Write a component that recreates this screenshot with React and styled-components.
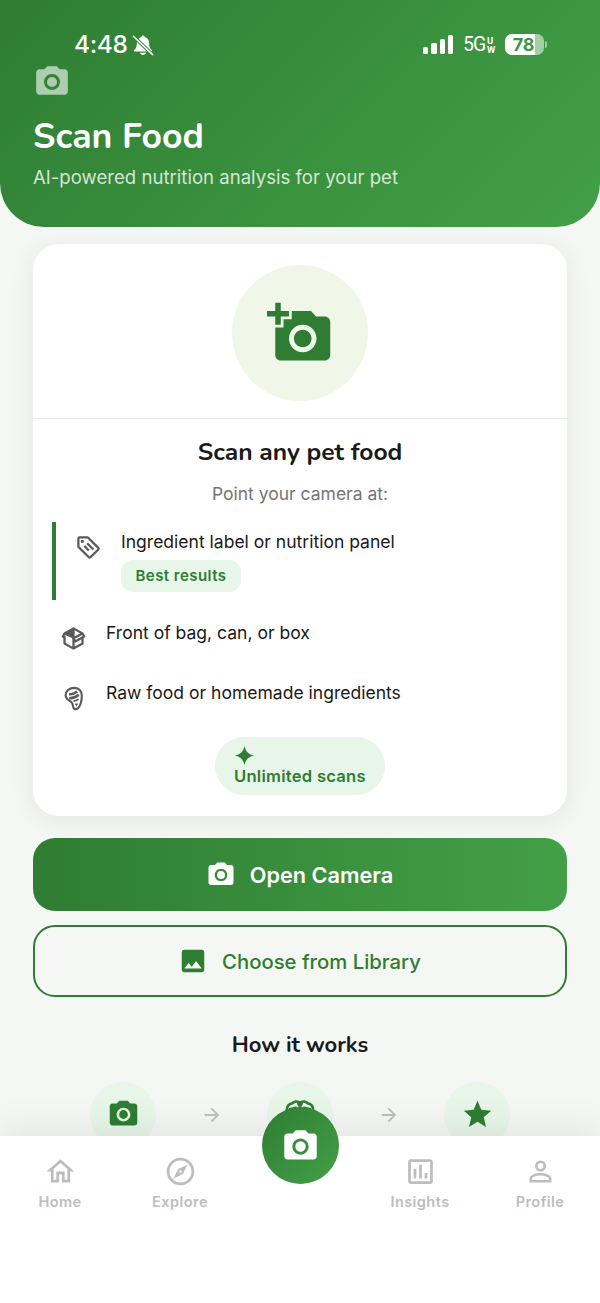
import React from 'react'
import styled, { createGlobalStyle } from 'styled-components'

const GlobalStyle = createGlobalStyle`
    * {
        box-sizing: border-box;
    }
    body {
        margin: 0;
        background-color: #f5f7f5;
        font-family: Inter, "Liberation Sans", sans-serif;
        color: #1a1a1a;
    }
    h1, h2, p {
        margin: 0;
    }
    button {
        font-family: inherit;
        cursor: pointer;
    }
`;

const heading = 'Nunito, Lato, "Open Sans", sans-serif';

const Screen = styled.div`
    position: relative;
    width: 600px;
    height: 1303px;
    overflow: hidden;
    background-color: #f5f7f5;
`;

const Svg = styled.svg`
    display: block;
    flex: none;
    width: ${props => props.$size}px;
    height: ${props => props.$size}px;
    fill: currentColor;
`;

const Header = styled.header`
    height: 227px;
    padding: 32px 33px 0;
    border-radius: 0 0 44px 44px;
    background: linear-gradient(135deg, #2e7d32, #43a047);
    color: white;
`;

const StatusBar = styled.div`
    height: 25px;
    padding: 0 20px 0 41px;
    display: flex;
    align-items: center;
    justify-content: space-between;
`;

const StatusGroup = styled.div`
    display: flex;
    align-items: center;
`;

const Time = styled.span`
    width: 58px;
    font-size: 24.5px;
    line-height: 25px;
    font-weight: 500;
    letter-spacing: -0.4px;
    white-space: nowrap;
`;

const Signal = styled.div`
    height: 19px;
    margin-right: 10px;
    display: flex;
    align-items: flex-end;
    gap: 3px;
`;

const SignalBar = styled.i`
    width: 5.2px;
    height: ${props => props.$height}px;
    border-radius: 1.5px;
    background-color: white;
`;

const Network = styled.span`
    width: 24px;
    font-family: Roboto, sans-serif;
    font-size: 19.5px;
    letter-spacing: -0.9px;
    font-weight: 400;
`;

const NetworkSub = styled.span`
    width: 18px;
    display: flex;
    flex-direction: column;
    font-family: Roboto, sans-serif;
    font-size: 9.5px;
    font-weight: 700;
    line-height: 9px;
`;

const Battery = styled.div`
    width: 39px;
    height: 21px;
    padding-right: 2px;
    border-radius: 7px;
    background: linear-gradient(to right, white 77%, #a3cfa5 77%);
    color: #3d9641;
    font-size: 18px;
    line-height: 21px;
    font-weight: 700;
    letter-spacing: -0.3px;
    text-align: center;
`;

const BatteryTip = styled.i`
    width: 2px;
    height: 7px;
    margin-left: 1px;
    border-radius: 0 4px 4px 0;
    background-color: #a3cfa5;
`;

const HeaderIcon = styled.div`
    margin-top: 6px;
    color: rgba(255, 255, 255, 0.6);
`;

const Title = styled.h1`
    margin-top: 14px;
    font-family: ${heading};
    font-size: 35.6px;
    line-height: 44px;
    font-weight: 700;
    white-space: nowrap;
`;

const Subtitle = styled.p`
    margin-top: 6px;
    font-size: 18.6px;
    line-height: 24px;
    color: rgba(255, 255, 255, 0.8);
    white-space: nowrap;
`;

const Card = styled.section`
    height: 572px;
    margin: 17px 33px 0;
    border-radius: 26px;
    background-color: white;
    box-shadow: 0 4px 26px rgba(0, 0, 0, 0.07);
`;

const Hero = styled.div`
    height: 175px;
    padding-top: 21px;
    border-bottom: 1px solid #ececec;
    display: flex;
    justify-content: center;
`;

const HeroCircle = styled.div`
    width: 136px;
    height: 136px;
    border-radius: 50%;
    background-color: #f0f7e9;
    color: #2e7d32;
    display: flex;
    align-items: center;
    justify-content: center;
`;

const CardTitle = styled.h2`
    margin-top: 17px;
    font-family: ${heading};
    font-size: 24.6px;
    line-height: 32px;
    font-weight: 700;
    text-align: center;
`;

const Hint = styled.p`
    margin-top: 14px;
    font-size: 17.5px;
    line-height: 24px;
    color: #757575;
    text-align: center;
`;

const Tip = styled.div`
    height: ${props => props.$best ? 78 : 60}px;
    margin: ${props => props.$best ? '16px 0 3px 19px' : '0 0 0 19px'};
    padding: ${props => props.$best ? '7px 0 0 19px' : '17px 0 0 8px'};
    border-left: ${props => props.$best ? '4px solid #2e7d32' : 'none'};
    display: flex;
    gap: 19px;
    color: #5a5a5a;
    svg {
        margin-top: 5px;
    }
`;

const TipText = styled.div`
    font-size: 17.55px;
    line-height: 25px;
    color: #1a1a1a;
    white-space: nowrap;
`;

const Badge = styled.div`
    width: 120px;
    height: 32px;
    margin-top: 6px;
    border-radius: 12px;
    background-color: #e8f5e9;
    color: #2e7d32;
    font-size: 15px;
    line-height: 32px;
    font-weight: 600;
    text-align: center;
    letter-spacing: 0.45px;
`;

const Unlimited = styled.div`
    width: 170px;
    height: 58px;
    margin: 14px auto 0;
    padding: 8px 0 0 19px;
    border-radius: 29px;
    background-color: #e8f5e9;
    color: #2e7d32;
    font-size: 16.6px;
    line-height: 21px;
    font-weight: 600;
    letter-spacing: 0.25px;
    white-space: nowrap;
`;

const Actions = styled.div`
    margin: 22px 33px 0;
    display: flex;
    flex-direction: column;
    gap: 14px;
`;

const Button = styled.button`
    height: ${props => props.$primary ? 73 : 72}px;
    padding: 0 1px 0 0;
    border: ${props => props.$primary ? 'none' : '2px solid #2e7d32'};
    border-radius: 22px;
    background: ${props => props.$primary ? 'linear-gradient(to right, #2e7d32, #43a047)' : 'transparent'};
    color: ${props => props.$primary ? 'white' : '#2e7d32'};
    font-size: ${props => props.$primary ? 21.7 : 20.3}px;
    font-weight: ${props => props.$primary ? 600 : 500};
    display: flex;
    align-items: center;
    justify-content: center;
    gap: 14px;
`;

const HowTitle = styled.h2`
    margin-top: 32px;
    font-family: ${heading};
    font-size: 22px;
    line-height: 32px;
    font-weight: 700;
    text-align: center;
`;

const Steps = styled.div`
    height: 65px;
    margin: 21px 90px 0;
    display: flex;
    align-items: center;
    justify-content: space-between;
    color: #bdbdbd;
`;

const Step = styled.div`
    width: 66px;
    height: 66px;
    padding-bottom: 1px;
    border-radius: 50%;
    background-color: #e8f5e9;
    color: #2e7d32;
    display: flex;
    align-items: center;
    justify-content: center;
`;

const TabBar = styled.nav`
    position: absolute;
    left: 0;
    right: 0;
    bottom: 0;
    height: 167px;
    padding-top: 19px;
    background-color: white;
    box-shadow: 0 -6px 36px rgba(0, 0, 0, 0.08);
    display: grid;
    grid-template-columns: repeat(5, 120px);
`;

const Tab = styled.a`
    display: flex;
    flex-direction: column;
    align-items: center;
    gap: 4px;
    color: #bdbdbd;
    font-size: 14.6px;
    line-height: 20px;
    font-weight: 600;
    letter-spacing: 0.4px;
`;

const ScanButton = styled.button`
    width: 77px;
    height: 77px;
    margin: -48px auto 0;
    padding: 1px 0 0;
    border: none;
    border-radius: 50%;
    background: linear-gradient(135deg, #2e7d32, #43a047);
    color: white;
    display: flex;
    align-items: center;
    justify-content: center;
`;

const paths = {
    camera: 'M12 8.8a3.2 3.2 0 1 0 0 6.4a3.2 3.2 0 1 0 0-6.4M9 2L7.17 4H4c-1.1 0-2 .9-2 2v12c0 1.1.9 2 2 2h16c1.1 0 2-.9 2-2V6c0-1.1-.9-2-2-2h-3.17L15 2H9zm3 15c-2.76 0-5-2.24-5-5s2.24-5 5-5 5 2.24 5 5-2.24 5-5 5z',
    addPhoto: 'M3 4V1h2v3h3v2H5v3H3V6H0V4h3zm3 6V7h3V4h7l1.83 2H21c1.1 0 2 .9 2 2v12c0 1.1-.9 2-2 2H5c-1.1 0-2-.9-2-2V10h3zm7 9c2.76 0 5-2.24 5-5s-2.24-5-5-5-5 2.24-5 5 2.24 5 5 5zm-3.2-5c0 1.77 1.43 3.2 3.2 3.2s3.2-1.43 3.2-3.2-1.43-3.2-3.2-3.2-3.2 1.43-3.2 3.2z',
    tag: 'M21.41 11.58L12.41 2.58A2 2 0 0 0 11 2H4A2 2 0 0 0 2 4V11A2 2 0 0 0 2.59 12.42L11.59 21.42A2 2 0 0 0 13 22A2 2 0 0 0 14.41 21.41L21.41 14.41A2 2 0 0 0 22 13A2 2 0 0 0 21.41 11.58M13 20L4 11V4H11L20 13M6.5 5A1.5 1.5 0 1 1 5 6.5A1.5 1.5 0 0 1 6.5 5M10.09 8.91L11.5 7.5L17 13L15.59 14.41M7.59 11.41L9 10L13 14L11.59 15.41Z',
    sparkle: 'M12 1C13.3 7.2 16.8 10.7 23 12C16.8 13.3 13.3 16.8 12 23C10.7 16.8 7.2 13.3 1 12C7.2 10.7 10.7 7.2 12 1Z',
    image: 'M21 19V5c0-1.1-.9-2-2-2H5c-1.1 0-2 .9-2 2v14c0 1.1.9 2 2 2h14c1.1 0 2-.9 2-2zM5 18l3.5-4.5 2.5 3.01L14.5 12l4.5 6H5z',
    arrow: 'M4 11V13H16L10.5 18.5L11.92 19.92L19.84 12L11.92 4.08L10.5 5.5L16 11H4Z',
    star: 'M12 17.27L18.18 21l-1.64-7.03L22 9.24l-7.19-.61L12 2 9.19 8.63 2 9.24l5.46 4.73L5.82 21z',
    home: 'M12 5.69L17 10.19V18H15V12H9V18H7V10.19L12 5.69M12 3L2 12H5V20H11V14H13V20H19V12H22',
    compass: 'M7,17L10.2,10.2L17,7L13.8,13.8L7,17M12,11.1A0.9,0.9 0 0,0 11.1,12A0.9,0.9 0 0,0 12,12.9A0.9,0.9 0 0,0 12.9,12A0.9,0.9 0 0,0 12,11.1M12,2A10,10 0 0,1 22,12A10,10 0 0,1 12,22A10,10 0 0,1 2,12A10,10 0 0,1 12,2M12,4A8,8 0 0,0 4,12A8,8 0 0,0 12,20A8,8 0 0,0 20,12A8,8 0 0,0 12,4Z',
    chart: 'M9 17H7V10H9V17M13 17H11V7H13V17M17 17H15V13H17V17M19 19H5V5H19V19M19 3H5C3.9 3 3 3.9 3 5V19C3 20.1 3.9 21 5 21H19C20.1 21 21 20.1 21 19V5C21 3.9 20.1 3 19 3Z',
    account: 'M12,4A4,4 0 0,1 16,8A4,4 0 0,1 12,12A4,4 0 0,1 8,8A4,4 0 0,1 12,4M12,5.9A2.1,2.1 0 0,0 9.9,8A2.1,2.1 0 0,0 12,10.1A2.1,2.1 0 0,0 14.1,8A2.1,2.1 0 0,0 12,5.9M12,13C14.67,13 20,14.33 20,17V20H4V17C4,14.33 9.33,13 12,13M12,14.9C9.03,14.9 5.9,16.36 5.9,17V18.1H18.1V17C18.1,16.36 14.97,14.9 12,14.9Z',
}

const Icon = ({name, size}) => (
    <Svg viewBox="0 0 24 24" $size={size}>
        <path fillRule="evenodd" d={paths[name]} />
    </Svg>
)

const Box = () => (
    <Svg viewBox="0 0 24 24" $size={27}>
        <g fill="none" stroke="currentColor" strokeWidth="2" strokeLinejoin="round">
            <path d="M4 9.5V16.5L12 21L20 16.5V11.5M12 11.5V21" />
            <path d="M12 3L20 7.5L21.5 10.2L13.5 14.7L12 11.7L20 7.5" />
            <path fill="currentColor" d="M12 3V11.2L4 7.5Z" />
            <path d="M4 7.5L2.5 10.2L4 11" />
        </g>
    </Svg>
)

const BellOff = () => (
    <Svg viewBox="0 0 24 24" $size={22}>
        <path d="M12 1.5c1 0 1.8.7 2 1.7 3 1 4.8 3.6 4.8 6.8 0 4.5 1 5.8 2.7 7.3.8.8.4 1.7-.5 1.7H3c-.9 0-1.3-.9-.5-1.7C4.2 15.8 5.2 14.5 5.2 10c0-3.2 1.8-5.8 4.8-6.8.2-1 1-1.7 2-1.7zM8.7 20.5h6.6c-.4 1.4-1.6 2.4-3.3 2.4s-2.9-1-3.3-2.4z" />
        <path d="M2 3L22 22" stroke="#338438" strokeWidth="3.8" />
        <path d="M1.5 2.5L22.5 22.5" stroke="currentColor" strokeWidth="1.7" strokeLinecap="round" />
    </Svg>
)

const Steak = () => (
    <Svg viewBox="0 0 24 24" $size={27}>
        <g fill="none" stroke="currentColor" strokeWidth="1.9" strokeLinejoin="round">
            <path d="M13 2.5C8 2.5 5 5.5 5 9.2c0 3.6 2.8 4.3 4.7 5.6 1.7 1.2 1.7 3 2 4.7.3 1.3 1.2 2 2.5 2 2.6 0 3.4-2.5 4.3-5.5.6-2 .9-4.3.9-6.5 0-4-2.7-7-6.4-7z" />
            <path strokeWidth="2.3" d="M8 8.2c2.8.2 5-.7 7.3-2.5M8.2 11.8c3.5 0 6-1.2 8.5-3.2" />
            <path strokeWidth="1.6" d="M12 14.2c2 0 3.3-.6 4.5-1.6" />
        </g>
        <path d="M13.2 16.5h2.8l-1.4 2.8z" />
    </Svg>
)

const Brain = () => (
    <Svg viewBox="0 0 24 24" $size={34}>
        <g fill="none" stroke="currentColor" strokeWidth="1.9" strokeLinecap="round" strokeLinejoin="round">
            <path d="M12 4.2C10.3 2.7 7.8 3 6.3 4.6 4 4.8 2.600 6.800 2.800 9 1.500 10.500 1.500 14 4 15.500c0 3 3 4.500 5.500 3.500h5c2.500 1 5.500-.5 5.500-3.500 2.500-1.500 2.500-5 1.200-6.500.2-2.200-1.200-4.200-3.500-4.400C16.200 3 13.700 2.700 12 4.200z" />
            <path d="M10.800 4.800L12 6.500L13.200 4.800M12 6.500V18M5 8.500C6.500 8.500 7.500 7.700 9 7.700M19 8.500C17.500 8.500 16.500 7.700 15 7.700" />
        </g>
    </Svg>
)

const App = () => {
    return (
        <>
            <GlobalStyle />
            <Screen>
                <Header>
                    <StatusBar>
                        <StatusGroup>
                            <Time>4:48</Time>
                            <BellOff />
                        </StatusGroup>
                        <StatusGroup>
                            <Signal>
                                {[7, 11, 15, 19].map(h => <SignalBar key={h} $height={h} />)}
                            </Signal>
                            <Network>5G</Network>
                            <NetworkSub><span>U</span><span>W</span></NetworkSub>
                            <Battery>78</Battery>
                            <BatteryTip />
                        </StatusGroup>
                    </StatusBar>
                    <HeaderIcon><Icon name="camera" size={38} /></HeaderIcon>
                    <Title>Scan Food</Title>
                    <Subtitle>AI-powered nutrition analysis for your pet</Subtitle>
                </Header>
                <Card>
                    <Hero>
                        <HeroCircle><Icon name="addPhoto" size={66} /></HeroCircle>
                    </Hero>
                    <CardTitle>Scan any pet food</CardTitle>
                    <Hint>Point your camera at:</Hint>
                    <Tip $best>
                        <Icon name="tag" size={27} />
                        <TipText>
                            Ingredient label or nutrition panel
                            <Badge>Best results</Badge>
                        </TipText>
                    </Tip>
                    <Tip>
                        <Box />
                        <TipText>Front of bag, can, or box</TipText>
                    </Tip>
                    <Tip>
                        <Steak />
                        <TipText>Raw food or homemade ingredients</TipText>
                    </Tip>
                    <Unlimited>
                        <Icon name="sparkle" size={21} />
                        Unlimited scans
                    </Unlimited>
                </Card>
                <Actions>
                    <Button $primary><Icon name="camera" size={30} />Open Camera</Button>
                    <Button><Icon name="image" size={30} />Choose from Library</Button>
                </Actions>
                <HowTitle>How it works</HowTitle>
                <Steps>
                    <Step><Icon name="camera" size={33} /></Step>
                    <Icon name="arrow" size={22} />
                    <Step><Brain /></Step>
                    <Icon name="arrow" size={22} />
                    <Step><Icon name="star" size={33} /></Step>
                </Steps>
                <TabBar>
                    <Tab><Icon name="home" size={33} />Home</Tab>
                    <Tab><Icon name="compass" size={33} />Explore</Tab>
                    <ScanButton><Icon name="camera" size={39} /></ScanButton>
                    <Tab><Icon name="chart" size={33} />Insights</Tab>
                    <Tab><Icon name="account" size={33} />Profile</Tab>
                </TabBar>
            </Screen>
        </>
    )
}

export default App
